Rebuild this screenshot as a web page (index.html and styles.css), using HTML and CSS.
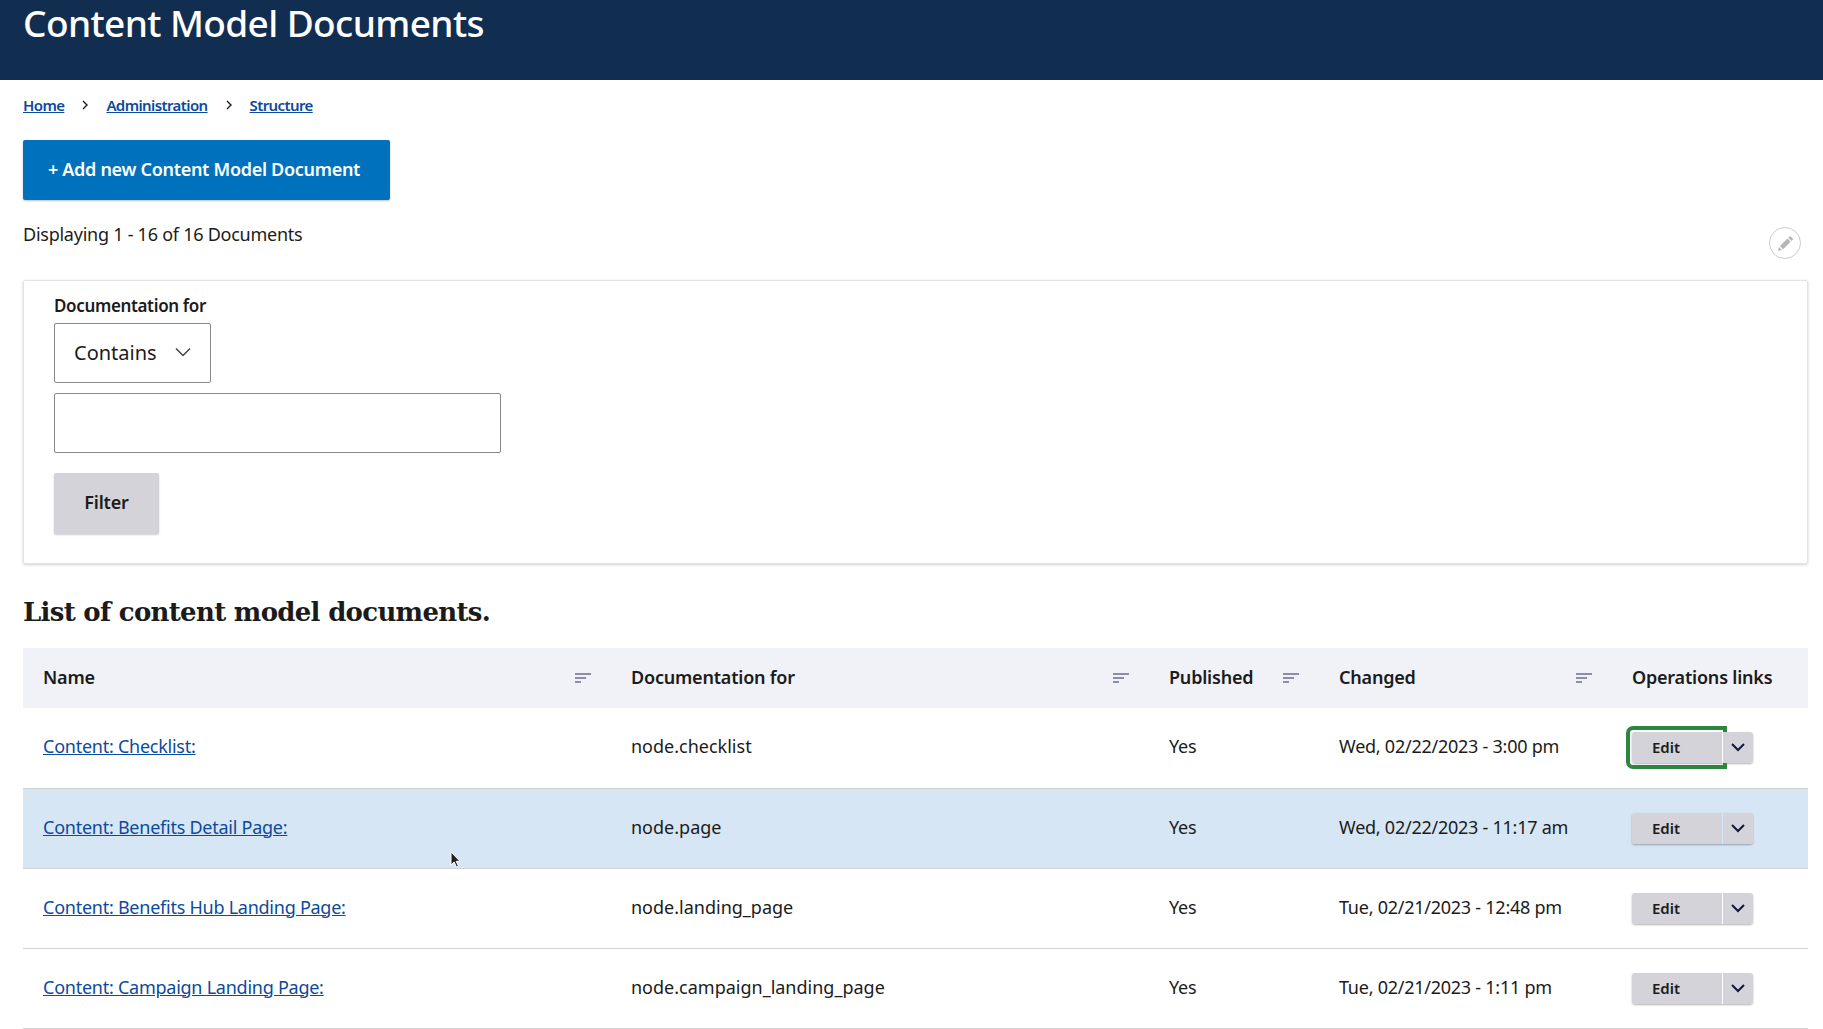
FILE: index.html
```html
<!DOCTYPE html>
<html lang="en">
<head>
    <meta charset="UTF-8">
    <meta name="viewport" content="width=device-width, initial-scale=1.0">
    <title>Content Model Documents</title>
    <link rel="stylesheet" href="styles.css">
</head>
<body>
    <header class="page-header">
        <h1>Content Model Documents</h1>
    </header>
    <main class="content">
        <nav class="breadcrumb">
            <a href="#">Home</a>
            <svg class="crumb-sep" viewBox="0 0 8 12"><path d="M2 2l4 4-4 4" fill="none" stroke="#1b1b1b" stroke-width="1.4"/></svg>
            <a href="#">Administration</a>
            <svg class="crumb-sep" viewBox="0 0 8 12"><path d="M2 2l4 4-4 4" fill="none" stroke="#1b1b1b" stroke-width="1.4"/></svg>
            <a href="#">Structure</a>
        </nav>
        <a class="btn-primary" href="#">+ Add new Content Model Document</a>
        <div class="summary-row">
            <p class="summary">Displaying 1 - 16 of 16 Documents</p>
            <span class="contextual">
                <svg viewBox="0 0 16 16"><path d="M1 15l.9-3.6 2.7 2.7zM2.8 10.4l7-7 3 3-7 7zM10.6 2.6l1.2-1.2a.8.8 0 0 1 1.1 0l1.9 1.9a.8.8 0 0 1 0 1.1l-1.2 1.2z" fill="#b5b5b5"/></svg>
            </span>
        </div>
        <form class="filter-box">
            <label for="docfor">Documentation for</label>
            <div class="select-box" id="docfor">
                <span>Contains</span>
                <svg viewBox="0 0 16 10"><path d="M1 1.5l7 7 7-7" fill="none" stroke="#3d4551" stroke-width="1.5"/></svg>
            </div>
            <input type="text" class="text-input">
            <button type="button" class="btn-filter">Filter</button>
        </form>
        <h2 class="list-title">List of content model documents.</h2>
        <table class="docs">
            <colgroup>
                <col class="col-name">
                <col class="col-doc">
                <col class="col-pub">
                <col class="col-changed">
                <col class="col-ops">
            </colgroup>
            <thead>
                <tr>
                    <th><div class="th-inner">Name<svg class="sort" viewBox="0 0 16 10"><path d="M0 0h16v2H0zM0 4h11v2H0zM0 8h6v2H0z"/></svg></div></th>
                    <th><div class="th-inner">Documentation for<svg class="sort" viewBox="0 0 16 10"><path d="M0 0h16v2H0zM0 4h11v2H0zM0 8h6v2H0z"/></svg></div></th>
                    <th><div class="th-inner">Published<svg class="sort" viewBox="0 0 16 10"><path d="M0 0h16v2H0zM0 4h11v2H0zM0 8h6v2H0z"/></svg></div></th>
                    <th><div class="th-inner">Changed<svg class="sort" viewBox="0 0 16 10"><path d="M0 0h16v2H0zM0 4h11v2H0zM0 8h6v2H0z"/></svg></div></th>
                    <th>Operations links</th>
                </tr>
            </thead>
            <tbody>
                <tr>
                    <td><a href="#">Content: Checklist:</a></td>
                    <td class="machine">node.checklist</td>
                    <td>Yes</td>
                    <td>Wed, 02/22/2023 - 3:00 pm</td>
                    <td><div class="dropbutton is-focused"><span class="drop-edit">Edit</span><span class="drop-toggle"><svg viewBox="0 0 14 9"><path d="M1 1l6 6 6-6" fill="none" stroke="#11183a" stroke-width="2"/></svg></span></div></td>
                </tr>
                <tr class="selected">
                    <td><a href="#">Content: Benefits Detail Page:</a></td>
                    <td class="machine">node.page</td>
                    <td>Yes</td>
                    <td>Wed, 02/22/2023 - 11:17 am</td>
                    <td><div class="dropbutton"><span class="drop-edit">Edit</span><span class="drop-toggle"><svg viewBox="0 0 14 9"><path d="M1 1l6 6 6-6" fill="none" stroke="#11183a" stroke-width="2"/></svg></span></div></td>
                </tr>
                <tr>
                    <td><a href="#">Content: Benefits Hub Landing Page:</a></td>
                    <td class="machine">node.landing_page</td>
                    <td>Yes</td>
                    <td>Tue, 02/21/2023 - 12:48 pm</td>
                    <td><div class="dropbutton"><span class="drop-edit">Edit</span><span class="drop-toggle"><svg viewBox="0 0 14 9"><path d="M1 1l6 6 6-6" fill="none" stroke="#11183a" stroke-width="2"/></svg></span></div></td>
                </tr>
                <tr>
                    <td><a href="#">Content: Campaign Landing Page:</a></td>
                    <td class="machine">node.campaign_landing_page</td>
                    <td>Yes</td>
                    <td>Tue, 02/21/2023 - 1:11 pm</td>
                    <td><div class="dropbutton"><span class="drop-edit">Edit</span><span class="drop-toggle"><svg viewBox="0 0 14 9"><path d="M1 1l6 6 6-6" fill="none" stroke="#11183a" stroke-width="2"/></svg></span></div></td>
                </tr>
            </tbody>
        </table>
    </main>
    <svg class="cursor" viewBox="0 0 12 18"><path d="M1 1v13l3.2-3 2.2 5 2-.9-2.2-4.8H10z" fill="#222" stroke="#fff" stroke-width="1"/></svg>
</body>
</html>
```

FILE: styles.css
```css
html, body {
    height: 1029px;
    overflow: hidden;
}

body {
    font-family: "Noto Sans", Arial, sans-serif;
    font-size: 18px;
    letter-spacing: -0.25px;
    color: #1b1b1b;
    background-color: #fff;
    margin: 0;
    padding: 0;
    position: relative;
}

a {
    color: #0b4a9e;
}

.page-header {
    background-color: #112e51;
    height: 80px;
    padding: 0 23px;
    box-sizing: border-box;
}

.page-header h1 {
    margin: 0;
    color: #fff;
    font-size: 37px;
    font-weight: 500;
    line-height: 46px;
    letter-spacing: -0.6px;
}

.content {
    padding: 0 15px 0 23px;
}

.breadcrumb {
    display: flex;
    align-items: center;
    height: 20px;
    margin-top: 15px;
    font-size: 15px;
    font-weight: 600;
    letter-spacing: -0.6px;
}

.crumb-sep {
    width: 8px;
    height: 12px;
    margin: 0 17px;
}

.btn-primary {
    display: flex;
    align-items: center;
    justify-content: center;
    width: 367px;
    height: 60px;
    margin-top: 25px;
    padding: 0 5px 2px 0;
    box-sizing: border-box;
    background-color: #0071bc;
    color: #fff;
    font-weight: 600;
    letter-spacing: -0.3px;
    text-decoration: none;
    border-radius: 2px;
    box-shadow: 0 1px 2px rgba(0, 0, 0, 0.25);
}

.summary-row {
    display: flex;
    justify-content: space-between;
    height: 80px;
}

.summary {
    margin: 21px 0 0;
    line-height: 26px;
}

.contextual {
    width: 32px;
    height: 32px;
    margin: 27px 7px 0 0;
    box-sizing: border-box;
    border: 1px solid #ccc;
    border-radius: 50%;
    display: flex;
    align-items: center;
    justify-content: center;
}

.contextual svg {
    width: 17px;
    height: 17px;
}

.filter-box {
    height: 284px;
    box-sizing: border-box;
    padding: 13px 30px 0;
    border: 1px solid #e2e2e8;
    border-radius: 2px;
    box-shadow: 0 1px 3px rgba(0, 0, 0, 0.18);
    display: flex;
    flex-direction: column;
    align-items: flex-start;
}

.filter-box label {
    font-size: 17px;
    font-weight: 600;
    line-height: 24px;
    margin-bottom: 5px;
    letter-spacing: -0.35px;
}

.select-box {
    width: 157px;
    height: 60px;
    box-sizing: border-box;
    border: 1px solid #888;
    border-radius: 2px;
    padding: 0 19px 2px;
    display: flex;
    align-items: center;
    justify-content: space-between;
    font-size: 20px;
    letter-spacing: 0;
}

.select-box svg {
    width: 16px;
    height: 10px;
}

.text-input {
    width: 447px;
    height: 60px;
    margin-top: 10px;
    box-sizing: border-box;
    border: 1px solid #888;
    border-radius: 2px;
}

.btn-filter {
    width: 105px;
    height: 61px;
    margin-top: 20px;
    padding-bottom: 4px;
    border: none;
    border-radius: 2px;
    background-color: #d3d3d9;
    color: #1b1b1b;
    font-family: inherit;
    font-size: 18px;
    font-weight: 600;
    letter-spacing: -0.2px;
    box-shadow: 0 1px 2px rgba(0, 0, 0, 0.2);
}

.list-title {
    margin: 30px 0 0;
    height: 54px;
    font-family: "DejaVu Serif", serif;
    font-size: 26px;
    font-weight: 700;
    line-height: 36px;
    letter-spacing: -0.7px;
}

.docs {
    width: 1785px;
    table-layout: fixed;
    border-collapse: collapse;
}

.col-name { width: 588px; }
.col-doc { width: 538px; }
.col-pub { width: 170px; }
.col-changed { width: 293px; }
.col-ops { width: 196px; }

.docs th {
    height: 60px;
    padding: 0 20px 2px;
    box-sizing: border-box;
    text-align: left;
    background-color: #f1f2f7;
    font-weight: 600;
    letter-spacing: -0.2px;
}

.th-inner {
    display: flex;
    align-items: center;
    justify-content: space-between;
}

.sort {
    width: 16px;
    height: 10px;
    margin-top: 2px;
    fill: #8b8ea8;
}

.docs td {
    height: 80px;
    padding: 0 20px 3px;
    border-bottom: 1px solid #d3d3d3;
    box-sizing: border-box;
}

.docs td.machine {
    letter-spacing: 0;
}

.docs tr.selected td {
    background-color: #d6e6f5;
}

.dropbutton {
    display: flex;
    position: relative;
    width: 121px;
    height: 31px;
    margin-top: 3px;
    font-size: 15px;
    font-weight: 600;
    letter-spacing: 0;
    border-radius: 3px;
    box-shadow: 0 1px 2px rgba(0, 0, 0, 0.3);
}

.drop-edit {
    width: 90px;
    padding-left: 20px;
    box-sizing: border-box;
    background-color: #d3d3d9;
    border-radius: 3px 0 0 3px;
    line-height: 30px;
}

.drop-toggle {
    position: relative;
    z-index: 1;
    width: 30px;
    margin-left: 1px;
    background-color: #d3d3d9;
    border-radius: 0 3px 3px 0;
    display: flex;
    align-items: center;
    justify-content: center;
}

.drop-toggle svg {
    width: 14px;
    height: 9px;
}

/* focus ring, the toggle sits on top of its right edge */
.is-focused::before {
    content: "";
    position: absolute;
    left: -6px;
    top: -6px;
    width: 101px;
    height: 43px;
    box-sizing: border-box;
    border: 4px solid #2e8540;
    border-radius: 7px 0 0 7px;
}

.cursor {
    position: absolute;
    left: 450px;
    top: 851px;
    width: 12px;
    height: 18px;
}
```
